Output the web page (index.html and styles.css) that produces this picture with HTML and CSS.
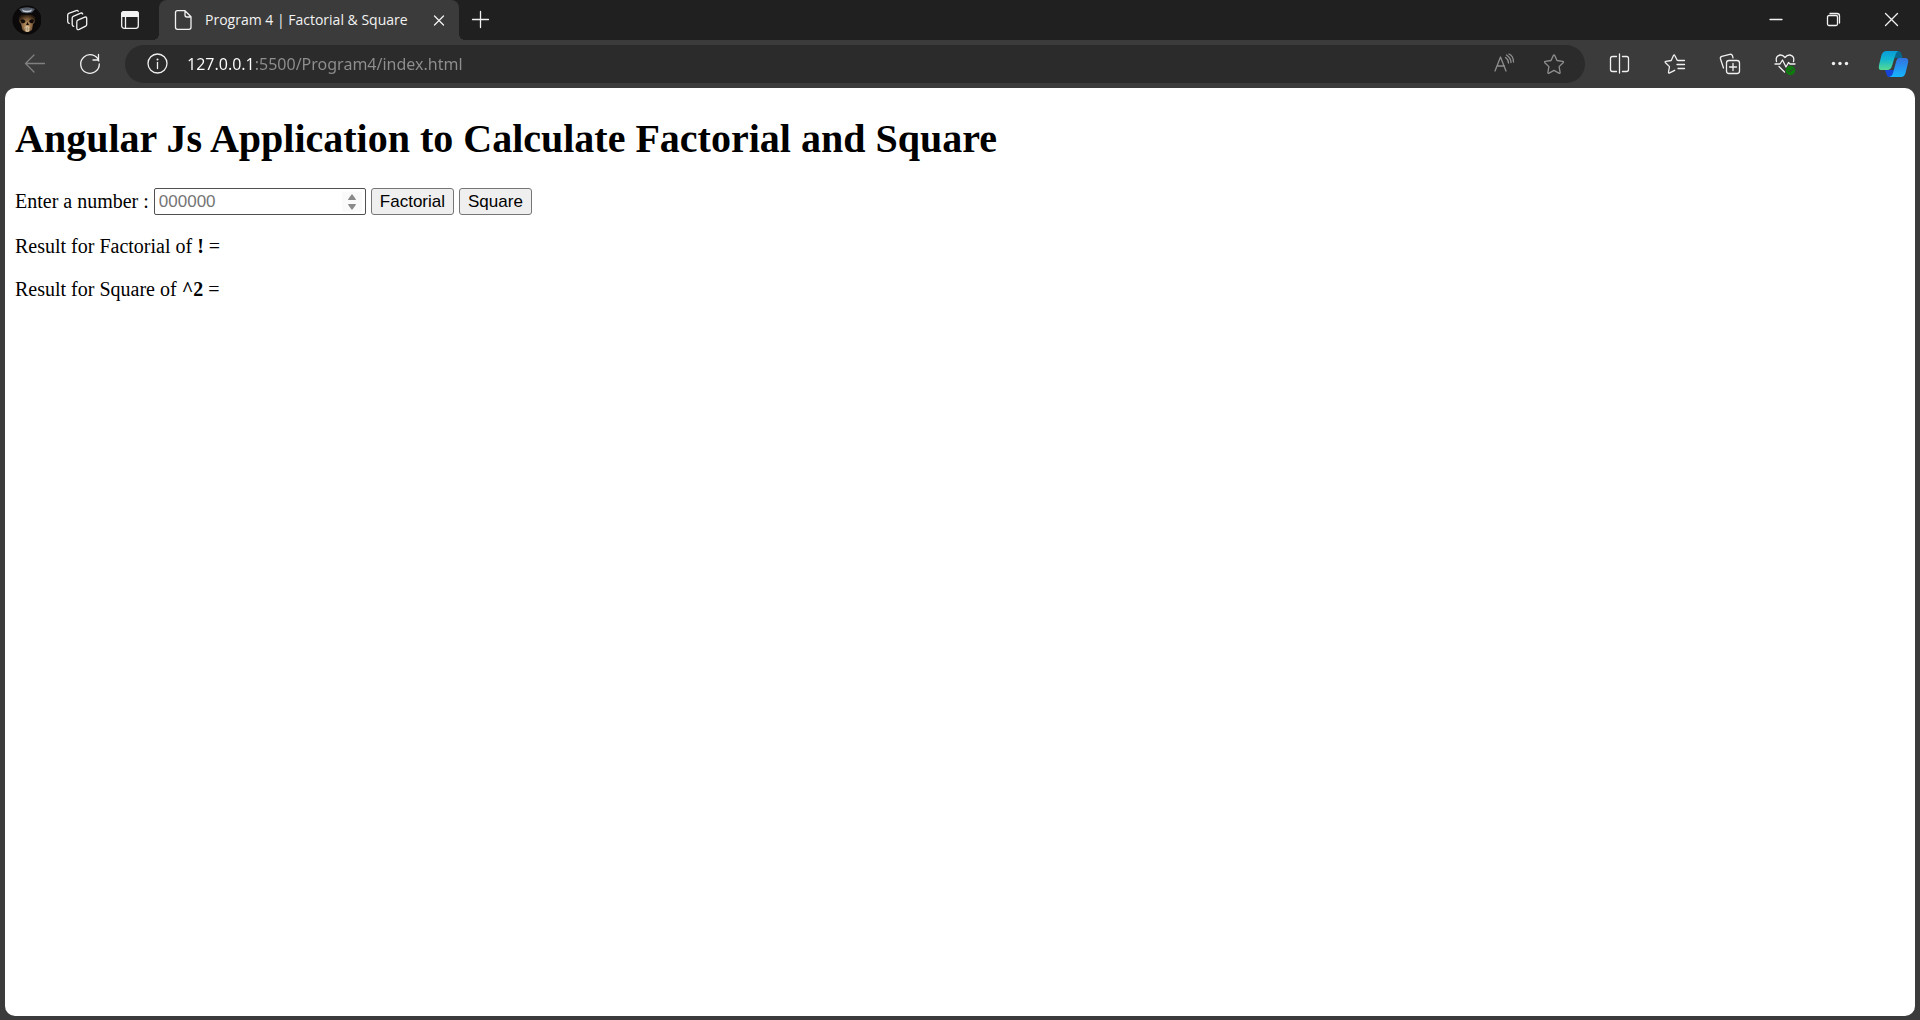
FILE: index.html
```html
<!DOCTYPE html>
<html lang="en">
<head>
<meta charset="utf-8">
<title>Program 4 | Factorial &amp; Square</title>
<link rel="stylesheet" href="styles.css">
</head>
<body>
<div class="browser">
  <header class="tabstrip">
    <button class="strip-button" aria-label="Profile">
      <svg class="avatar" viewBox="0 0 30 30">
        <defs>
          <radialGradient id="skull" cx="50%" cy="60%" r="60%"><stop offset="0" stop-color="#c39c6b"/><stop offset=".6" stop-color="#7d5a38"/><stop offset="1" stop-color="#2b1d12"/></radialGradient>
        </defs>
        <circle cx="16" cy="15" r="14.500" fill="#0b0909"/>
        <path d="M8 4Q16 .500 24 4L21 7.500Q16 9 11 7.500Z" fill="#555c69"/>
        <path d="M11 4.500Q16 7 21 4.500L20 6.500Q16 8 12 6.500Z" fill="#c9d0dc"/>
        <path d="M8 13Q9 9 16 10Q22 9 24 13Q25 17 22 19L21 25Q16 29 11.500 25L10 19Q7 16 8 13Z" fill="url(#skull)"/>
        <path d="M9.500 15Q12 13 14.500 16Q14 19 10.500 18ZM18 16Q20 13 23 15L22 18Q19 19 18 16ZM15 20l1.500-3 1.500 3z" fill="#100b08"/>
        <path d="M13.500 22q3-2 5.500 0l-.5 4q-2 2-4.500 0z" fill="#d8c19e"/>
        <path d="M13 24h6M14.500 22v4M16.500 22v4M18.500 22v4" stroke="#8d7352" stroke-width=".4"/>
      </svg>
    </button>
    <button class="strip-button" aria-label="Workspaces">
      <svg class="icon" viewBox="0 0 24 24"><path d="M11.800 12.200l7-3q1.900-.7 1.900 1.200v6.100q0 1.200-1 1.700l-6.500 3.100q-2.400 1-2.400-1.300v-6q0-1.300 1-1.800zM7.700 18.300q-1.500-.2-1.500-1.800V10q0-1.200 1-1.700l7.500-3.200q1.400-.5 2 .9M3.200 15.300q-1.500-.2-1.500-1.800V7q0-1.200 1-1.700l7.500-2.700q1.400-.5 2 .6"/></svg>
    </button>
    <button class="strip-button" aria-label="Tab actions">
      <svg class="icon" viewBox="0 0 24 24"><rect x="3.700" y="3.700" width="16.600" height="16.600" rx="2.500"/><path d="M7.500 9v11"/><path class="solid" d="M3 9V6q0-3 3-3h12q3 0 3 3v3z"/></svg>
    </button>
    <div class="tab">
      <svg class="icon" viewBox="0 0 24 24"><path d="M6.500 2.700H14l6 6v10.600q0 2-2 2H6.500q-2 0-2-2V4.700q0-2 2-2zM14 3v4q0 2 2 2h4"/></svg>
      <span class="tab-title">Program 4 | Factorial &amp; Square</span>
      <button class="tab-close" aria-label="Close tab"><svg class="icon" viewBox="0 0 24 24"><path d="M7.500 8l9 9M16.500 8l-9 9"/></svg></button>
    </div>
    <button class="new-tab" aria-label="New tab"><svg class="icon" viewBox="0 0 24 24"><path d="M11.500 3.500v16M3.500 11.500h16"/></svg></button>
    <div class="window-controls">
      <button class="window-button" aria-label="Minimize"><svg class="icon" viewBox="0 0 24 24"><path d="M7 11.500h12"/></svg></button>
      <button class="window-button" aria-label="Restore"><svg class="icon" viewBox="0 0 24 24"><rect x="6.500" y="7.500" width="10" height="10" rx="1.500"/><path d="M9 5.500h7q2.500 0 2.500 2.500v7"/></svg></button>
      <button class="window-button" aria-label="Close"><svg class="icon" viewBox="0 0 24 24"><path d="M6.500 5.500l12 12M18.500 5.500l-12 12"/></svg></button>
    </div>
  </header>

  <nav class="toolbar" aria-label="Browser toolbar">
    <button class="tool-button dim" aria-label="Back"><svg class="icon" viewBox="0 0 24 24"><path d="M21.500 11.500h-19M11 3L2.500 11.500l8.500 8.500"/></svg></button>
    <button class="tool-button" aria-label="Refresh"><svg class="icon" viewBox="0 0 24 24"><path d="M20.800 9A9.300 9.300 0 1 0 21.300 12M20.500 2.500V8h-5.500"/></svg></button>
    <div class="address">
      <svg class="icon" viewBox="0 0 24 24"><circle cx="12.500" cy="11.500" r="9.500"/><path d="M12.500 10.500v6"/><circle class="solid" cx="12.500" cy="7.500" r="1"/></svg>
      <input class="url" type="text" aria-label="Address" value="127.0.0.1:5500/Program4/index.html">
      <button class="address-button" aria-label="Read aloud"><svg class="icon" viewBox="0 0 24 24"><path d="M3 19L8.500 5l5.500 14M5 14h7.500M13.500 5.500q3 2 3 5.500M14.500 3q4.500 3 4.500 7.500M17 2q4.500 2 4.500 8"/></svg></button>
      <button class="address-button" aria-label="Add to favorites"><svg class="icon" viewBox="0 0 24 24"><path d="M11.300 3.500q.7-1.400 1.400 0l2.300 5 5.600.8q1.500.3.500 1.400l-4 3.900 1 5.700q.2 1.500-1.200.8L12 18.400l-4.900 2.700q-1.400.7-1.200-.8l1-5.700-4-3.900q-1-1.100.5-1.400L9 8.500z"/></svg></button>
    </div>
    <button class="tool-button" aria-label="Split screen"><svg class="icon" viewBox="0 0 24 24"><path d="M8.500 4.500h-4q-2 0-2 2v11q0 2 2 2h4M14.500 4.500h4q2 0 2 2v11q0 2-2 2h-4M11.500 2v19"/></svg></button>
    <button class="tool-button" aria-label="Favorites"><svg class="icon" viewBox="0 0 24 24"><path d="M15.500 8.500l-1.300-.2-2.400-4.800q-.6-1.300-1.300 0l-2.300 5-5.200.8q-1.500.3-.5 1.400l4 3.900-1 5.400q-.2 1.500 1.200.8l5-2.500M15 8.500h6.500M14 12.500h7.500M15 16.500h6.500"/></svg></button>
    <button class="tool-button" aria-label="Collections"><svg class="icon" viewBox="0 0 24 24"><rect x="8.500" y="8.500" width="13" height="13" rx="2.500"/><path d="M15 11.500v7M11.500 15h7M5.500 16l-3-9q-.6-2 1.300-2.700l8-2q2-.4 2.700 1.500l.5 2"/></svg></button>
    <button class="tool-button" aria-label="Browser essentials"><svg class="icon" viewBox="0 0 24 24"><path d="M3.500 9.500q-1.300-5.500 3.500-6.500 3-.2 5 2.500Q14 2.800 17 3q4.800 1 3.500 6.500M2 12h5l2.500-4 3.500 7 2.500-4.500L17 12h5M6 14.500l5.500 5.500"/><circle class="badge" cx="17.500" cy="18.500" r="4.700"/><path class="tick" d="M15.500 18.500l1.500 1.500 3-3"/></svg></button>
    <button class="tool-button" aria-label="Settings and more"><svg class="icon" viewBox="0 0 24 24"><g class="solid"><circle cx="5.500" cy="11.500" r="1.700"/><circle cx="12" cy="11.500" r="1.700"/><circle cx="18.500" cy="11.500" r="1.700"/></g></svg></button>
    <button class="tool-button" aria-label="Copilot">
      <svg class="copilot" viewBox="1 0 34 28">
        <defs>
          <linearGradient id="leftWing" x1="0" y1="0" x2="0" y2="1"><stop offset="0" stop-color="#099bd9"/><stop offset=".45" stop-color="#13b6ce"/><stop offset="1" stop-color="#58db91"/></linearGradient>
          <linearGradient id="rightWing" x1="0" y1="0" x2="0" y2="1"><stop offset="0" stop-color="#3472df"/><stop offset="1" stop-color="#16b5ff"/></linearGradient>
        </defs>
        <path d="M13 1h8q2.500 0 3.500 3l1 4h-8z" fill="#08678f"/>
        <path d="M8 20h11l-3 7h-4q-2 0-2.500-3z" fill="#1646d7"/>
        <path d="M9.500 1H21q-2 1-3 5l-3 10q-1.300 4-4.500 4H4q-3 0-2-5L4.500 5Q6 1 9.500 1z" fill="url(#leftWing)"/>
        <path d="M22 8h6q4 0 3 5l-2.500 10q-1 4-4.500 4H12q3-.5 4-4l3-11q1-4 3-4z" fill="url(#rightWing)"/>
      </svg>
    </button>
  </nav>

  <main class="page">
    <h1 class="heading">Angular Js Application to Calculate Factorial and Square</h1>
    <form class="form">
      <label for="number">Enter a number :</label>
      <input class="number" id="number" type="number" placeholder="000000">
      <button class="action" type="button">Factorial</button>
      <button class="action" type="button">Square</button>
    </form>
    <p class="result">Result for Factorial of <b>!</b> =</p>
    <p class="result">Result for Square of <b>^2</b> =</p>
  </main>
</div>
</body>
</html>
```
FILE: styles.css
```css
* { box-sizing: border-box; }

body {
  margin: 0;
  background: #3b3b3b;
}

.browser {
  display: flex;
  flex-direction: column;
  min-height: 100vh;
  font-family: "Open Sans", "Noto Sans", sans-serif;
}

.browser svg { display: block; flex: none; }

.icon {
  width: 24px;
  height: 24px;
  fill: none;
  stroke: currentColor;
  stroke-width: 1.3;
  stroke-linecap: round;
  stroke-linejoin: round;
}

.solid { fill: currentColor; stroke: none; }
.badge { fill: #0f7b0f; stroke: none; }
.tick { stroke: #3b3b3b; stroke-width: 1; }

.strip-button, .new-tab, .window-button, .tool-button, .tab-close, .address-button {
  display: flex;
  align-items: center;
  justify-content: center;
  padding: 0;
  border: 0;
  background: none;
  color: inherit;
}

.tabstrip {
  display: flex;
  height: 40px;
  background: #202020;
  color: #f2f2f2;
}

.strip-button { width: 52px; }

.avatar { width: 30px; height: 30px; }

.tab {
  position: relative;
  display: flex;
  align-items: center;
  width: 300px;
  margin-left: 3px;
  padding: 0 8px 0 12px;
  border-radius: 8px 8px 0 0;
  background: #3b3b3b;
}

/* Flared feet where the tab meets the toolbar */
.tab::before, .tab::after {
  content: "";
  position: absolute;
  bottom: 0;
  width: 6px;
  height: 6px;
}
.tab::before { right: 100%; background: radial-gradient(circle at 0 0, transparent 6px, #3b3b3b 6px); }
.tab::after { left: 100%; background: radial-gradient(circle at 100% 0, transparent 6px, #3b3b3b 6px); }

.tab-title {
  flex: 1;
  margin-left: 10px;
  font-size: 14px;
  line-height: 20px;
  white-space: nowrap;
}

.new-tab { width: 43px; }

.window-controls { display: flex; margin-left: auto; }
.window-button { width: 58px; }

.toolbar {
  display: flex;
  align-items: center;
  gap: 9px;
  height: 48px;
  padding: 0 2px 0 12px;
  color: #f0f0f0;
}

.tool-button { width: 46px; height: 38px; }
.dim { color: #808080; }
.copilot { width: 34px; height: 28px; }

.address {
  display: flex;
  flex: 1;
  align-items: center;
  height: 38px;
  margin: 0 3px;
  padding: 0 19px 0 20px;
  border-radius: 19px;
  background: #2b2b2b;
}

.url {
  flex: 1;
  min-width: 0;
  margin-left: 18px;
  padding: 0;
  border: 0;
  outline: 0;
  font: 16px/24px "Noto Sans", "Open Sans", sans-serif;
  color: #8f8f8f;
  /* The host is bright, the rest of the address is muted */
  background: linear-gradient(90deg, #ffffff 68px, #8f8f8f 68px);
  -webkit-background-clip: text;
  background-clip: text;
  -webkit-text-fill-color: transparent;
}

.address-button { color: #8f8f8f; }
.address-button + .address-button { margin-left: 26px; }

.page {
  flex: 1;
  margin: 0 5px 4px;
  padding: 28px 10px;
  border-radius: 10px;
  background: #ffffff;
  color: #000000;
  font: 20px/23px "Liberation Serif", "Times New Roman", serif;
}

.heading {
  margin: 0 0 26px;
  font-size: 40px;
  line-height: 46px;
}

.form {
  display: flex;
  align-items: center;
  gap: 5px;
  margin-bottom: 20px;
}

.number, .action {
  height: 27px;
  font: 17px/20px "Liberation Sans", Arial, sans-serif;
}

.number {
  width: 212px;
  padding: 1px 3px 1px 4px;
  border: 1px solid #505050;
  border-radius: 2px;
}
.number::placeholder { color: #757575; }
.number::-webkit-inner-spin-button {
  -webkit-appearance: none;
  width: 20px;
  height: 20px;
  opacity: 1;
  background: #fafafa url("data:image/svg+xml,%3Csvg xmlns='http://www.w3.org/2000/svg' width='20' height='20'%3E%3Cpath d='M6 8q0-1 4-6 4 5 4 6zM6 12q0 1 4 6 4-5 4-6z' fill='%238a8a8a'/%3E%3C/svg%3E") no-repeat center;
}

.action {
  padding: 0 8px;
  border: 1px solid #767676;
  border-radius: 3px;
  background: #efefef;
  color: #000000;
}

.result { margin: 0 0 20px; }
```
